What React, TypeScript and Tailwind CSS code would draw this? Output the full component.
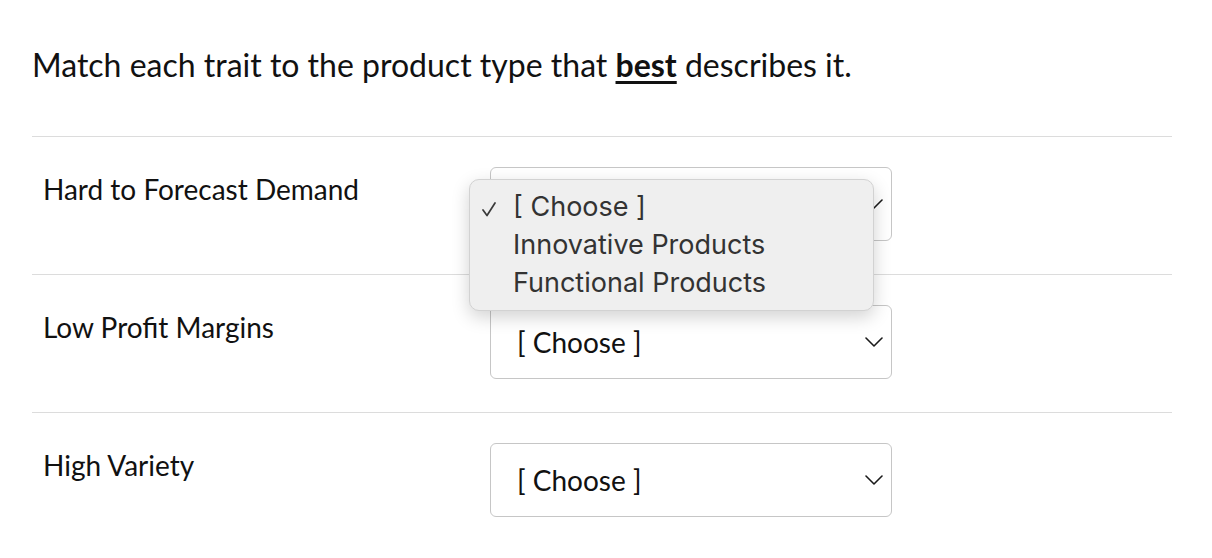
const ROWS = ["Hard to Forecast Demand", "Low Profit Margins", "High Variety"];
const OPTIONS = ["[ Choose ]", "Innovative Products", "Functional Products"];

const Chevron = () => (
  <svg width="18" height="10" viewBox="0 0 18 10" fill="none" stroke="#1a1a1a" strokeWidth="1.6" strokeLinecap="round" strokeLinejoin="round">
    <polyline points="1,1 9,9 17,1" />
  </svg>
);

const Check = () => (
  <svg width="14" height="15" viewBox="0 0 14 15" fill="none" stroke="#3a3a3a" strokeWidth="1.7" strokeLinecap="round" strokeLinejoin="round" className="mt-[4px]">
    <polyline points="1,8 5,13.5 13,1" />
  </svg>
);

const SelectBox = () => (
  <div className="flex h-[74px] w-[402px] items-center justify-between rounded-[6px] border border-[#c6c6c6] bg-white pl-[26px] pr-[8px]">
    <span className="text-[28px] text-[#111]">[ Choose ]</span>
    <Chevron />
  </div>
);

const Popup = () => (
  <div className="absolute left-[-21px] top-[12px] z-10 w-[405px] rounded-[10px] border border-[#d2d2d2] bg-[#efefef] py-[8px] shadow-[0_6px_18px_rgba(0,0,0,0.18)] font-['Inter',sans-serif] text-[27px] text-[#333]">
    {OPTIONS.map((opt, i) => (
      <div key={opt} className="flex h-[38px] items-center">
        <span className="flex w-[43px] pl-[12px]">{i === 0 && <Check />}</span>
        <span>{opt}</span>
      </div>
    ))}
  </div>
);

export default function App() {
  return (
    <div className="min-h-screen bg-white px-[32px] font-['Lato',sans-serif] text-[#111]">
      <h1 className="pt-[42px] text-[32px] leading-[45px]">
        Match each trait to the product type that{" "}
        <span className="font-bold underline underline-offset-[4px]">best</span> describes it.
      </h1>

      <div className="mt-[49px] w-[1140px]">
        {ROWS.map((label, i) => (
          <div key={label} className="flex border-t border-[#dcdcdc] pt-[30px] pb-[33px]">
            <div className="w-[458px] pl-[11px] pt-[4px] text-[28px] leading-[36px]">{label}</div>
            <div className="relative">
              <SelectBox />
              {i === 0 && <Popup />}
            </div>
          </div>
        ))}
      </div>
    </div>
  );
}
